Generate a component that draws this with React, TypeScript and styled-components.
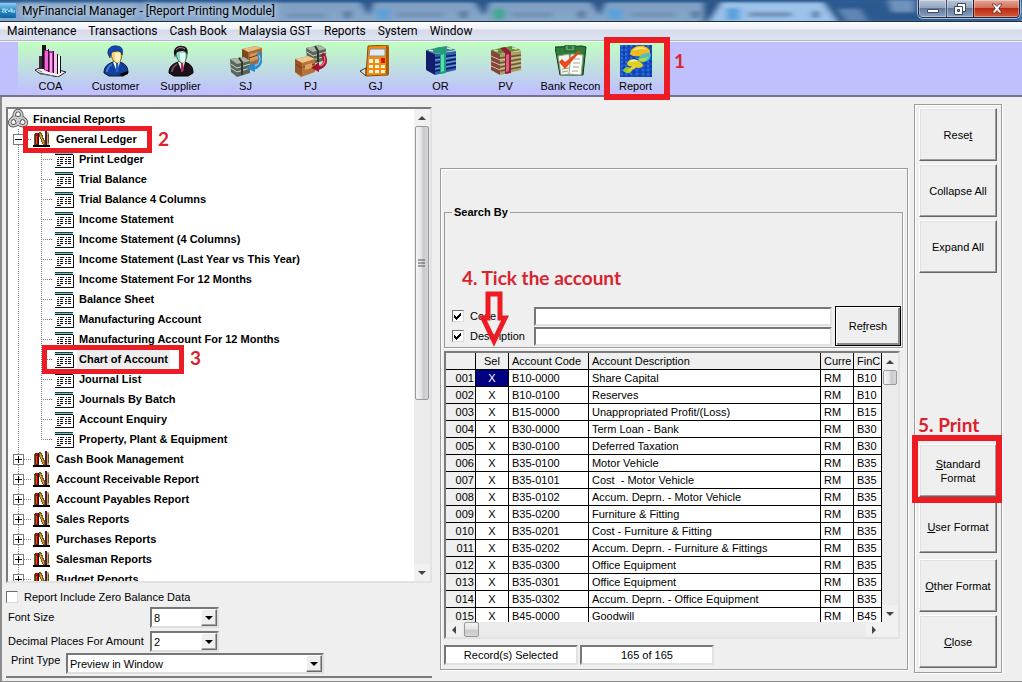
import React, { useState } from 'react';
import styled, { createGlobalStyle, css } from 'styled-components';

const RED = '#ed1c24';
const FACE = '#efefef';

const GlobalStyle = createGlobalStyle`
  * { box-sizing: border-box; }
  body { margin: 0; background: ${FACE}; }
  body, button, input, select, table { font: 11px/14px "Liberation Sans", Arial, sans-serif; color: #000; }
`;

/* ---------- frame ---------- */

const Window = styled.div`
  display: flex;
  flex-direction: column;
  min-height: 100vh;
  background: ${FACE};
`;

const TitleBar = styled.header`
  position: relative;
  display: flex;
  align-items: center;
  height: 22px;
  overflow: hidden;
  background: linear-gradient(#2a5c92 0 1px, #7f9fc3 4px, #86a6ca 20px);
  border-bottom: 1px solid #1f2f45;
`;

const Backdrop = styled.svg`
  position: absolute;
  inset: 0;
  width: 100%;
  height: 100%;
`;

const AppIcon = styled.svg`
  position: relative;
  flex: none;
`;

const Title = styled.h1`
  position: relative;
  flex: 1;
  margin: 0;
  padding-left: 6px;
  font: 12px/20px Roboto, "Open Sans", sans-serif;
  white-space: nowrap;
  text-shadow: 0 0 6px #dce8f5, 0 0 8px #dce8f5;
`;

const WindowButtons = styled.div`
  position: relative;
  align-self: flex-start;
  display: flex;
  height: 18px;
  margin-right: 2px;
  border: 1px solid #1d2c42;
  border-top: 0;
  border-radius: 0 0 5px 5px;
  overflow: hidden;
  box-shadow: 0 0 0 1px #a9bdd6;
`;

const WindowButton = styled.button<{ $close?: boolean }>`
  display: grid;
  place-items: center;
  width: ${p => (p.$close ? 46 : 27)}px;
  padding: 0;
  border: 0;
  border-left: 1px solid ${p => (p.$close ? '#3a1616' : '#3d4f69')};
  background: ${p => p.$close
    ? 'linear-gradient(#e3a899, #d1705c 45%, #b92b11 50%, #d8593a)'
    : 'linear-gradient(#b9c6d8, #93a6c0 45%, #62799b 50%, #8ba3c2)'};
  box-shadow: inset 0 0 0 1px rgba(255, 255, 255, 0.35);
  &:first-child { border-left: 0; }
`;

const MenuBar = styled.nav`
  display: flex;
  gap: 12px;
  height: 19px;
  padding-left: 7px;
  background: linear-gradient(#fdfdfe 0, #eef1f8 7px, #d5daea 8px, #dfe4f2);
  border-bottom: 1px solid #b4b8c2;
`;

const MenuItem = styled.button`
  padding: 0;
  border: 0;
  background: none;
  font: 12px/19px Roboto, "Open Sans", sans-serif;
  white-space: nowrap;
`;

const Toolbar = styled.div`
  display: flex;
  height: 56px;
  padding-left: 18px;
  background: #c0c0ff;
  border-top: 1px solid #f2f2fb;
  border-bottom: 2px solid #77748a;
`;

const ToolGroup = styled.div`
  display: flex;
  background: linear-gradient(#c0ffc0, #c0c0ff 50px);
`;

const Tool = styled.button`
  position: relative;
  display: flex;
  flex-direction: column;
  align-items: center;
  gap: 2px;
  width: 65px;
  padding: 3px 0 0;
  border: 0;
  background: none;
  white-space: nowrap;
`;

/* ---------- walkthrough marks ---------- */

const Highlight = styled.span<{ $top: number; $left: number; $width: number; $height: number; $weight?: number }>`
  position: absolute;
  z-index: 2;
  top: ${p => p.$top}px;
  left: ${p => p.$left}px;
  width: ${p => p.$width}px;
  height: ${p => p.$height}px;
  border: ${p => p.$weight ?? 5}px solid ${RED};
  pointer-events: none;
`;

const Step = styled.span<{ $top: number; $left: number }>`
  position: absolute;
  z-index: 3;
  top: ${p => p.$top}px;
  left: ${p => p.$left}px;
  font: bold 19px/22px Lato, "Open Sans", sans-serif;
  color: #d9232e;
  white-space: nowrap;
`;

const ArrowMark = styled.svg`
  position: absolute;
  z-index: 3;
  top: 71px;
  left: 34px;
  pointer-events: none;
`;

/* ---------- workspace ---------- */

const Workspace = styled.main`
  flex: 1;
  display: grid;
  grid-template-columns: minmax(0, 426fr) minmax(0, 468fr) 88px;
  column-gap: 6px;
  padding: 7px 20px 0 4px;
  border-left: 2px solid #8b8b8b;
  border-bottom: 1px solid #8b8b8b;
`;

const ReportColumn = styled.section`
  display: flex;
  flex-direction: column;
  padding: 3px 0 3px;
  margin-right: 1px;
`;

const TreeBox = styled.div`
  flex: 1 1 0;
  min-height: 200px;
  display: flex;
  background: #fff;
  border: 2px solid;
  border-color: #7b7b7b #e2e2e2 #e2e2e2 #7b7b7b;
`;

const TreeList = styled.ul`
  flex: 1;
  height: 0;
  min-height: 100%;
  min-width: 0;
  margin: 0;
  padding: 0;
  overflow: hidden;
  list-style: none;
  font-weight: bold;
`;

const TreeRow = styled.li`
  position: relative;
  display: flex;
  align-items: center;
  height: 20px;
`;

const dotsDown = 'repeating-linear-gradient(#808080 0 1px, transparent 1px 2px)';
const dotsAcross = 'repeating-linear-gradient(90deg, #808080 0 1px, transparent 1px 2px)';

const Guide = styled.span<{ $width: number; $x: number; $branch?: boolean; $last?: boolean }>`
  flex: none;
  align-self: stretch;
  display: flex;
  align-items: center;
  width: ${p => p.$width}px;
  padding-left: 5px;
  background-repeat: no-repeat;
  ${p => p.$branch
    ? css`
        background-image: ${dotsDown}, ${dotsAcross};
        background-position: ${p.$x}px 0, ${p.$x}px 10px;
        background-size: 1px ${p.$last ? 10 : 20}px, ${p.$width - p.$x - 2}px 1px;
      `
    : css`
        background-image: ${dotsDown};
        background-position: ${p.$x}px 0;
        background-size: 1px 20px;
      `}
`;

const Expander = styled.button`
  display: block;
  width: 11px;
  height: 11px;
  padding: 0;
  border: 1px solid #7b7b7b;
  background: #fff;
  svg { display: block; }
`;

const TreeIcon = styled.svg`
  flex: none;
`;

const TreeLabel = styled.span<{ $selected?: boolean; $gap: number }>`
  margin-left: ${p => p.$gap}px;
  padding: 2px;
  line-height: 14px;
  white-space: nowrap;
  background: ${p => (p.$selected ? '#ededed' : 'transparent')};
`;

const Options = styled.div`
  display: flex;
  flex-direction: column;
  padding: 7px 0 2px;
  border-bottom: 2px solid #7b7b7b;
`;

const OptionRow = styled.div<{ $height?: number }>`
  display: flex;
  align-items: flex-start;
  height: ${p => p.$height ?? 24}px;
`;

const OptionLabel = styled.label<{ $width: number; $indent?: number; $top?: number }>`
  width: ${p => p.$width}px;
  padding-top: ${p => p.$top ?? 3}px;
  padding-left: ${p => p.$indent ?? 2}px;
  white-space: nowrap;
`;

const CheckLabel = styled.label`
  display: flex;
  align-items: center;
  gap: 6px;
  height: 14px;
  white-space: nowrap;
`;

const tick = (
  <svg width="9" height="9" viewBox="0 0 9 9" shapeRendering="crispEdges">
    <path d="M1 3v3l2 2 5-5V0L3 5z" fill="#000" />
  </svg>
);

const CheckFrame = styled.span`
  position: relative;
  display: grid;
  place-items: center;
  width: 12px;
  height: 12px;
  background: #fff;
  border: 1px solid;
  border-color: #6f6f6f #dcdcdc #dcdcdc #6f6f6f;
  input { position: absolute; inset: 0; width: 100%; height: 100%; margin: 0; opacity: 0; }
  svg { display: none; }
  input:checked + svg { display: block; }
`;

const SelectFrame = styled.div<{ $width: number }>`
  position: relative;
  width: ${p => p.$width}px;
  height: 21px;
  border: 2px solid;
  border-color: #777 #dedede #dedede #777;
  background: #fff;
  select {
    display: block;
    width: 100%;
    height: 17px;
    padding: 0 20px 0 2px;
    border: 0;
    background: transparent;
    appearance: none;
  }
`;

const DropArrow = styled.span`
  position: absolute;
  top: 0;
  right: 0;
  display: grid;
  place-items: center;
  width: 16px;
  height: 17px;
  background: ${FACE};
  border: 1px solid;
  border-color: #fff #6b6b6b #6b6b6b #fff;
  box-shadow: inset -1px -1px #a5a5a5;
  pointer-events: none;
`;

/* ---------- scroll bars ---------- */

const ScrollTrack = styled.div<{ $across?: boolean }>`
  flex: none;
  display: flex;
  flex-direction: ${p => (p.$across ? 'row' : 'column')};
  ${p => (p.$across ? 'height: 15px;' : 'width: 16px;')}
  background: #ebebeb;
`;

const ScrollStep = styled.button<{ $across?: boolean }>`
  flex: none;
  display: grid;
  place-items: center;
  width: 16px;
  height: ${p => (p.$across ? 15 : 17)}px;
  padding: 0;
  border: 0;
  background: #f1f1f1;
`;

const ScrollThumb = styled.div<{ $across?: boolean; $size: string }>`
  display: grid;
  place-items: center;
  ${p => (p.$across ? `width: ${p.$size};` : `height: ${p.$size};`)}
  margin: ${p => (p.$across ? '0 0 0 2px' : '0 1px')};
  border: 1px solid #9a9a9a;
  border-radius: 2px;
  background: linear-gradient(${p => (p.$across ? '180deg' : '90deg')}, #f5f5f5, #e4e4e6 45%, #c9c9cd 60%, #d6d6d9);
`;

const Stretch = styled.span`
  flex: 1;
`;

/* ---------- account panel ---------- */

const AccountColumn = styled.section`
  display: flex;
  flex-direction: column;
  padding: 64px 0 11px 1px;
`;

const AccountPanel = styled.div`
  flex: 1;
  display: flex;
  flex-direction: column;
  padding: 36px 4px 4px 3px;
  border: 1px solid #9c9c9c;
  box-shadow: inset 1px 1px #fff, 1px 1px #fff;
`;

const SearchBox = styled.fieldset`
  position: relative;
  min-width: 0;
  margin: 0;
  padding: 87px 1px 1px 7px;
  border: 1px solid #9c9c9c;
  box-shadow: 1px 1px #fff;
  legend { padding: 0 2px; font-weight: bold; }
`;

const SearchGrid = styled.div`
  display: grid;
  grid-template-columns: 82px minmax(0, 1fr) 66px;
  grid-template-rows: 20px 20px;
  align-items: center;
`;

const SearchInput = styled.input`
  width: calc(100% - 3px);
  height: 19px;
  padding: 0 2px;
  background: #fff;
  border: 2px solid;
  border-color: #777 #e2e2e2 #e2e2e2 #777;
`;

const RefreshButton = styled.button`
  grid-row: 1 / 3;
  grid-column: 3;
  height: 40px;
  padding: 0;
  background: ${FACE};
  border: 1px solid #000;
  box-shadow: inset 1px 1px #fff, inset -2px -2px #8a8a8a;
`;

const GridBox = styled.div`
  flex: 1 1 0;
  min-height: 120px;
  display: flex;
  flex-direction: column;
  margin: 3px 3px 6px 0;
  border: 2px solid;
  border-color: #7b7b7b #e2e2e2 #e2e2e2 #7b7b7b;
`;

const GridTop = styled.div`
  flex: 1 1 0;
  min-height: 0;
  display: flex;
`;

const GridView = styled.div`
  flex: 1;
  height: 0;
  min-width: 0;
  min-height: 100%;
  overflow: hidden;
`;

const AccountTable = styled.table`
  width: 100%;
  table-layout: fixed;
  border-collapse: separate;
  border-spacing: 0;
  background: #fff;
  th, td {
    height: 17px;
    padding: 1px 0 0 3px;
    border-right: 1px solid #000;
    border-bottom: 1px solid #000;
    font-weight: normal;
    line-height: 15px;
    text-align: left;
    white-space: pre;
    overflow: hidden;
  }
  th { background: ${FACE}; }
  tbody th { padding-right: 1px; text-align: right; }
  th:nth-child(2), td:nth-child(2) { padding-left: 0; text-align: center; }
`;

const SelCell = styled.td<{ $current: boolean }>`
  ${p => p.$current && css`background: #000080; color: #fff;`}
`;

const StatusRow = styled.div`
  display: flex;
  gap: 2px;
`;

const StatusField = styled.output`
  width: 134px;
  height: 20px;
  line-height: 16px;
  text-align: center;
  background: #fff;
  border: 2px solid;
  border-color: #777 #e2e2e2 #e2e2e2 #777;
`;

/* ---------- commands ---------- */

const CommandColumn = styled.aside`
  display: flex;
  flex-direction: column;
  padding-bottom: 8px;
`;

const CommandPanel = styled.div`
  flex: 1;
  display: flex;
  flex-direction: column;
  gap: 3px;
  padding: 3px 4px 4px;
  border: 1px solid #9c9c9c;
  box-shadow: inset 1px 1px #fff, 1px 1px #fff;
`;

const Command = styled.button`
  position: relative;
  height: 53px;
  padding: 0;
  background: ${FACE};
  border: 1px solid;
  border-color: #fff #666 #666 #fff;
  box-shadow: inset -1px -1px #9e9e9e, inset 1px 1px #e2e2e2;
`;

const CommandGap = styled.span<{ $grow?: boolean }>`
  ${p => (p.$grow ? 'flex: 1;' : 'height: 0;')}
`;

/* ---------- drawings ---------- */

const Arrow = ({ dir }: { dir: 'up' | 'down' | 'left' | 'right' }) => {
  const d = {
    up: 'M0 6l4-4 4 4z',
    down: 'M0 2h8l-4 4z',
    left: 'M6 0v8L2 4z',
    right: 'M2 0v8l4-4z',
  }[dir];
  return <svg width="8" height="8" viewBox="0 0 8 8"><path d={d} fill="#444" /></svg>;
};

const KnotIcon = () => (
  <TreeIcon width="20" height="20" viewBox="0 0 20 20" fill="none">
    <g stroke="#555" strokeWidth="3.6">
      <ellipse cx="10" cy="6.500" rx="3.800" ry="5" />
      <ellipse cx="6.500" cy="12.500" rx="3.800" ry="5" transform="rotate(60 6.500 12.500)" />
      <ellipse cx="13.500" cy="12.500" rx="3.800" ry="5" transform="rotate(-60 13.500 12.500)" />
    </g>
    <g stroke="#cfcfcf" strokeWidth="1.8">
      <ellipse cx="10" cy="6.500" rx="3.800" ry="5" />
      <ellipse cx="6.500" cy="12.500" rx="3.800" ry="5" transform="rotate(60 6.500 12.500)" />
      <ellipse cx="13.500" cy="12.500" rx="3.800" ry="5" transform="rotate(-60 13.500 12.500)" />
    </g>
  </TreeIcon>
);

const BooksIcon = () => (
  <TreeIcon width="17" height="16" viewBox="0 0 17 16" shapeRendering="crispEdges">
    <path d="M0 14h17v2H0z" fill="#000" />
    <path d="M1 3h1v11H1z" fill="#0a8a2c" />
    <path d="M2 2h4v12H2z" fill="#a80808" /><path d="M3 5h1v8H3z" fill="#f04030" />
    <path d="M5 2h1v12H5z" fill="#300" />
    <path d="M6 1h2l4 9v4h-2L6 5z" fill="#7a5a10" /><path d="M7 3l4 10" stroke="#d0a838" />
    <path d="M12 0h2v14h-2z" fill="#4b1a50" /><path d="M14 1h2v13h-2z" fill="#c9ab45" />
    <path d="M15 3h1v9h-1z" fill="#6a5010" />
  </TreeIcon>
);

const ReportIcon = () => (
  <TreeIcon width="19" height="18" viewBox="0 0 19 18" shapeRendering="crispEdges">
    <path d="M1 2h17v15H1z" fill="#fff" />
    <path d="M0 2h18v1H0z" fill="#2b3a3a" /><path d="M0 3h18v1H0z" fill="#5cc8c4" />
    <path d="M0 4h18v1H0zM0 17h19v1H0zM18 5h1v13h-1z" fill="#111" />
    <path d="M3 7h1v1H3zM5 7h4v1H5zM2 9h2v1H2zM5 9h3v1H5zM2 11h2v1H2zM5 11h3v1H5zM2 13h2v1H2zM5 13h3v1H5zM2 15h4v1H2zM11 7h1v1h-1zM13 7h3v1h-3zM10 9h2v1h-2zM13 9h3v1h-3zM10 11h2v1h-2zM13 11h3v1h-3zM10 13h2v1h-2zM13 13h3v1h-3z" fill="#111" />
  </TreeIcon>
);

const toolIcons: Record<string, React.ReactNode> = {
  COA: (
    <>
      <path d="M0 25l9-4 22 6-8 5L4 28z" fill="#f4f0f4" stroke="#222" />
      <path d="M3 25l4 2M5 29l14 2" stroke="#777" />
      <path d="M7 0h4v24H7z" fill="#1a1218" /><path d="M4 11h3v13H4z" fill="#3a303a" />
      <path d="M9 5h5v22l-5-2z" fill="#8c1c80" /><path d="M10 6h3v19h-3z" fill="#e868d6" />
      <path d="M14 6h5v22l-5-1z" fill="#b52aa4" /><path d="M15 8h2v19h-2z" fill="#f7a0ec" />
      <path d="M13 4h1v23h-1zM18 6h1v22h-1z" fill="#2b0a28" />
      <path d="M19 9h4v20l-4-1z" fill="#f4c4ee" /><path d="M22 9h1v20h-1z" fill="#111" />
      <path d="M23 11h2v17h-2z" fill="#fff" /><path d="M25 11h1v17h-1z" fill="#111" />
    </>
  ),
  Customer: (
    <>
      <path d="M4 28c0-7 4-9 9-11h7c5 2 8 4 8 11l-5 3H9z" fill="#12409c" stroke="#0a1430" />
      <path d="M7 27c0-4 2-6 5-8" stroke="#3d7de0" strokeWidth="2" fill="none" />
      <path d="M19 29l9-3v3l-5 2z" fill="#000" />
      <path d="M13 17l4 10 3-10z" fill="#fff" /><path d="M16 18h2l1 7-2 2-1-2z" fill="#1d5bc8" />
      <path d="M11 7c0-5 11-5 11 1 0 6-2 10-5 10s-6-5-6-11z" fill="#ffd36a" stroke="#533708" strokeWidth=".7" />
      <path d="M15 8h5v8l-2 2c-3-1-3-5-3-10z" fill="#fff6c8" />
      <path d="M8 9c-1-6 4-9 9-8 4 0 7 3 5 9-1-3-2-4-5-4-3 1-5 0-6 3l-1 4z" fill="#1246b4" stroke="#081c50" strokeWidth=".6" />
    </>
  ),
  Supplier: (
    <>
      <path d="M4 28c0-7 4-9 9-11h7c5 2 8 4 8 11l-5 3H9z" fill="#1c1218" stroke="#000" />
      <path d="M7 27c0-4 2-6 5-8" stroke="#6b4e5c" strokeWidth="2" fill="none" />
      <path d="M13 17l4 10 3-10z" fill="#fff" /><path d="M16 18h2l1 7-2 2-1-2z" fill="#b02a68" />
      <path d="M11 7c0-5 11-5 11 1 0 6-2 10-5 10s-6-5-6-11z" fill="#8fdcc0" stroke="#113a2e" strokeWidth=".7" />
      <path d="M15 8h5v8l-2 2c-3-1-3-5-3-10z" fill="#e6fff4" />
      <path d="M9 9c-1-6 4-9 8-8 4 0 7 3 5 9-1-3-2-4-5-4-3 1-5 0-6 3l-1 4z" fill="#1e141a" />
      <path d="M11 5c2-3 6-3 9-1" stroke="#b98aa6" fill="none" />
    </>
  ),
  SJ: (
    <>
      <path d="M12 4l14-3 6 2v14l-15 5-5-4z" fill="#a86a34" /><path d="M12 4l14-3 6 2-14 4z" fill="#e6bd84" />
      <path d="M12 4l6 3v14l-6-3z" fill="#7d481c" /><path d="M20 9l9-2v7l-9 3z" fill="#d39a5c" /><path d="M19 13l12-4" stroke="#6d3c14" />
      <path d="M0 14l14-2 6 4v12L7 32l-6-5z" fill="#59645a" />
      <path d="M0 14l14-2 6 4-13 3z" fill="#a9b5a5" /><path d="M1 19l6 4 13-4M1 23l6 4 13-4" stroke="#cdd6c8" fill="none" />
      <path d="M9 13l3 4v13" stroke="#2e382f" strokeWidth="2" fill="none" />
      <path d="M28 8c4 6 3 13-5 15" fill="none" stroke="#2d86c8" strokeWidth="4" /><path d="M29 10c2 5 1 9-4 11" fill="none" stroke="#8cccf4" strokeWidth="1.2" />
      <path d="M25 17v10l-9-4z" fill="#2d86c8" />
    </>
  ),
  PJ: (
    <>
      <path d="M11 3l14-3 6 4v11l-13 4-6-5z" fill="#59645a" /><path d="M11 3l14-3 6 4-13 3z" fill="#a9b5a5" />
      <path d="M12 7l6 4 13-4M12 11l6 4 13-4" stroke="#cdd6c8" fill="none" /><path d="M20 1l3 5v11" stroke="#2e382f" strokeWidth="2" fill="none" />
      <path d="M0 14l13-3 7 3v13L6 32l-6-5z" fill="#b87438" /><path d="M0 14l13-3 7 3-13 4z" fill="#efc890" />
      <path d="M0 14l7 4v13l-7-4z" fill="#96582a" /><path d="M8 22l12-3M1 19l6 4" stroke="#713d16" /><path d="M10 20l7-2v5l-7 2z" fill="#dba265" />
      <path d="M27 9c5 5 4 12-4 14" fill="none" stroke="#a5122e" strokeWidth="4" /><path d="M29 11c2 4 1 8-4 10" fill="none" stroke="#f07a90" strokeWidth="1.2" />
      <path d="M24 17v10l-8-4z" fill="#a5122e" />
    </>
  ),
  GJ: (
    <>
      <path d="M0 26l6-3v8z" fill="#ddd" stroke="#333" />
      <path d="M8 1l20-1v30l-22 1z" fill="#f08a10" stroke="#8a4a00" /><path d="M26 1l3 1v27l-3 1z" fill="#a85a06" />
      <path d="M10 4h15v7H9z" fill="#e4ebee" stroke="#8a8f93" />
      <g fill="#fff3d8">
        <path d="M9 14h4v4H9zM15 14h4v4h-4zM9 20h4v3H9zM15 20h4v3h-4zM21 20h4v3h-4zM9 25h4v3H9zM15 25h4v3h-4zM21 25h4v3h-4z" />
      </g>
      <path d="M21 13h4v5h-4z" fill="#d81810" />
    </>
  ),
  OR: (
    <>
      <path d="M1 5l9 4v21l-9-5z" fill="#141c6c" /><path d="M10 9l21-3v19l-21 5z" fill="#2f5fae" />
      <path d="M1 5l20-4 10 4-21 4z" fill="#3a8f86" />
      <path d="M10 13l21-3M10 18l21-4M10 22l21-4M10 26l21-4" stroke="#0c1b66" strokeWidth="1.6" />
      <path d="M10 15l21-3M10 20l21-4M10 24l21-4" stroke="#84b4da" strokeWidth=".8" />
      <path d="M10 3l5-1 6 5v21l-6 1V8z" fill="#16a276" /><path d="M16 10l3-1v17l-3 1z" fill="#5cdcae" />
      <path d="M4 5l4 1M22 3l5 1" stroke="#c4ecd8" strokeWidth="1.4" />
    </>
  ),
  PV: (
    <>
      <path d="M1 5l9 4v21l-9-5z" fill="#80483c" /><path d="M10 9l21-3v19l-21 5z" fill="#b49a68" />
      <path d="M1 5l20-4 10 4-21 4z" fill="#6c8a3c" />
      <path d="M10 13l21-3M10 18l21-4M10 22l21-4M10 26l21-4" stroke="#59622c" strokeWidth="1.6" />
      <path d="M1 11l9 4M1 16l9 4M1 21l9 4M10 15l21-3M10 20l21-4M10 24l21-4" stroke="#e2b49c" strokeWidth="1" />
      <path d="M10 3l5-1 6 5v21l-6 1V8z" fill="#9c1838" /><path d="M16 10l3-1v17l-3 1z" fill="#d66478" />
      <path d="M4 5l4 1M22 3l5 1" stroke="#dce4a4" strokeWidth="1.4" />
    </>
  ),
  'Bank Recon': (
    <>
      <path d="M0 2l27-1 4 1-3 28H5z" fill="#2c7c38" stroke="#103c18" />
      <path d="M10 0h10v6H10z" fill="#5c9a62" stroke="#1f5f2a" /><path d="M13 1h4v3h-4z" fill="#2c7c38" />
      <path d="M3 11l11-2 3 20-11 1z" fill="#eff3ea" stroke="#8da08c" /><path d="M16 9l12 1-2 20-12-1z" fill="#fbfdf6" stroke="#9cab98" />
      <path d="M19 14h6M18 18h7M18 22h6M17 26h6M7 24l7-1M7 27l6-1" stroke="#9aa697" />
      <path d="M5 17l5 6L25 6 10 18l-3-3z" fill="#f0501c" stroke="#e8441c" strokeWidth="1.4" />
    </>
  ),
  Report: (
    <>
      <path d="M0 0h32v32H0z" fill="#1650c4" />
      <path d="M2 0v32M6 0v32M11 0v32M17 0v32M23 0v32M28 0v32" stroke="#3f8af0" strokeDasharray="2 2" />
      <path d="M4 1v31M9 0v32M14 1v31M20 0v32M26 1v31M31 0v32" stroke="#0a2f90" strokeDasharray="3 2" />
      <path d="M10 9c1-10 17-11 20-3 0 4-2 6-6 6-8-2-9 1-14-3z" fill="#f2b81c" /><path d="M13 6c3-5 11-5 14-1-5-2-9-1-14 1z" fill="#fdeb8a" />
      <path d="M18 14c2-6 12-8 13-4-1 7-8 9-13 4z" fill="#4cc0c8" /><path d="M18 15c4-3 10-1 11-5-3 8-8 8-11 5z" fill="#b6dc30" />
      <path d="M7 19c1-7 13-5 16 1 0 3-5 4-8 2-3-2-6 1-8-3z" fill="#dccf26" /><path d="M9 17c2-3 6-3 9-1z" fill="#fbf6a0" />
      <path d="M3 26c1-5 8-5 9-1-1 5-7 3-9 1z" fill="#8ccc2c" /><path d="M6 28l10-5-2-4z" fill="#f0d030" />
    </>
  ),
};

/* ---------- data ---------- */

const menus = ['Maintenance', 'Transactions', 'Cash Book', 'Malaysia GST', 'Reports', 'System', 'Window'];
const tools = ['COA', 'Customer', 'Supplier', 'SJ', 'PJ', 'GJ', 'OR', 'PV', 'Bank Recon', 'Report'];

const ledgerReports = [
  'Print Ledger', 'Trial Balance', 'Trial Balance 4 Columns', 'Income Statement', 'Income Statement (4 Columns)',
  'Income Statement (Last Year vs This Year)', 'Income Statement For 12 Months', 'Balance Sheet',
  'Manufacturing Account', 'Manufacturing Account For 12 Months', 'Chart of Account', 'Journal List',
  'Journals By Batch', 'Account Enquiry', 'Property, Plant & Equipment',
];

const groups = [
  'Cash Book Management', 'Account Receivable Report', 'Account Payables Report', 'Sales Reports',
  'Purchases Reports', 'Salesman Reports', 'Budget Reports',
];

const accounts: [string, string, string][] = [
  ['B10-0000', 'Share Capital', 'B10'],
  ['B10-0100', 'Reserves', 'B10'],
  ['B15-0000', 'Unappropriated Profit/(Loss)', 'B15'],
  ['B30-0000', 'Term Loan - Bank', 'B30'],
  ['B30-0100', 'Deferred Taxation', 'B30'],
  ['B35-0100', 'Motor Vehicle', 'B35'],
  ['B35-0101', 'Cost  - Motor Vehicle', 'B35'],
  ['B35-0102', 'Accum. Deprn. - Motor Vehicle', 'B35'],
  ['B35-0200', 'Furniture & Fitting', 'B35'],
  ['B35-0201', 'Cost - Furniture & Fitting', 'B35'],
  ['B35-0202', 'Accum. Deprn. - Furniture & Fittings', 'B35'],
  ['B35-0300', 'Office Equipment', 'B35'],
  ['B35-0301', 'Office Equipment', 'B35'],
  ['B35-0302', 'Accum. Deprn. - Office Equipment', 'B35'],
  ['B45-0000', 'Goodwill', 'B45'],
];

/* ---------- parts ---------- */

const ExpandButton = ({ open, name }: { open?: boolean; name: string }) => (
  <Expander aria-label={`${open ? 'Collapse' : 'Expand'} ${name}`}>
    <svg width="9" height="9" viewBox="0 0 9 9" shapeRendering="crispEdges">
      <path d={open ? 'M1 4h7v1H1z' : 'M1 4h7v1H1zM4 1h1v7H4z'} fill="#000" />
    </svg>
  </Expander>
);

const CheckBox = ({ label, initial }: { label: string; initial?: boolean }) => {
  const [on, setOn] = useState(!!initial);
  return (
    <CheckLabel>
      <CheckFrame>
        <input type="checkbox" checked={on} onChange={e => setOn(e.target.checked)} />
        {tick}
      </CheckFrame>
      {label}
    </CheckLabel>
  );
};

const DropDown = ({ id, width, value }: { id: string; width: number; value: string }) => (
  <SelectFrame $width={width}>
    <select id={id} defaultValue={value}><option>{value}</option></select>
    <DropArrow><svg width="8" height="4" viewBox="0 0 8 4"><path d="M0 0h8L4 4z" /></svg></DropArrow>
  </SelectFrame>
);

const Tree = () => {
  const [selected, setSelected] = useState('Chart of Account');
  return (
    <TreeList>
      <TreeRow><KnotIcon /><TreeLabel $gap={3}>Financial Reports</TreeLabel></TreeRow>
      <TreeRow>
        <Guide $width={25} $x={10} $branch><ExpandButton open name="General Ledger" /></Guide>
        <BooksIcon />
        <TreeLabel $gap={4}>General Ledger</TreeLabel>
        <Highlight $top={-3} $left={15} $width={129} $height={27} />
        <Step $top={-1} $left={150}>2</Step>
      </TreeRow>
      {ledgerReports.map((name, i) => (
        <TreeRow key={name} onClick={() => setSelected(name)}>
          <Guide $width={25} $x={10} />
          <Guide $width={22} $x={8} $branch $last={i === ledgerReports.length - 1} />
          <ReportIcon />
          <TreeLabel $gap={3} $selected={name === selected}>{name}</TreeLabel>
          {name === 'Chart of Account' && (
            <>
              <Highlight $top={-4} $left={34} $width={142} $height={29} />
              <Step $top={-2} $left={182}>3</Step>
            </>
          )}
        </TreeRow>
      ))}
      {groups.map(name => (
        <TreeRow key={name}>
          <Guide $width={25} $x={10} $branch><ExpandButton name={name} /></Guide>
          <BooksIcon />
          <TreeLabel $gap={4}>{name}</TreeLabel>
        </TreeRow>
      ))}
    </TreeList>
  );
};

export default function App() {
  return (
    <Window>
      <GlobalStyle />
      <TitleBar>
        <Backdrop viewBox="0 0 1022 21" preserveAspectRatio="none">
          <defs><filter id="soft"><feGaussianBlur stdDeviation="3 1.5" /></filter></defs>
          <g filter="url(#soft)">
            <path d="M360 0h14l-5 16zM474 0h16l-6 16zM590 0h16l-6 16zM704 0h18l-10 22h-8z" fill="#2a5588" />
            <path d="M722 3h100l14 20H708z" fill="#9cc3ea" />
            <path d="M822 0h200v22H838z" fill="#2a5a90" />
            <path d="M838 9h22l8 12h-22z" fill="#5f86b5" /><path d="M888 0h26v12h-22z" fill="#6f93bd" />
            <path d="M377 9h12v10h-12zM608 9h14v10h-14zM726 8h14v12h-14z" fill="#5aa0dc" />
            <circle cx="499" cy="14" r="6" fill="#3da88c" />
            <path d="M396 12h48v5h-48zM512 12h40v5h-40zM630 12h45v5h-45zM748 12h44v5h-44zM286 13h40v5h-40z" fill="#7592b6" />
            <path d="M460 11h7v7h-7zM578 11h7v7h-7zM692 11h7v7h-7zM812 11h7v7h-7zM344 11h7v7h-7z" fill="#5a7699" />
          </g>
        </Backdrop>
        <AppIcon width="16" height="16" viewBox="0 0 16 16">
          <defs><linearGradient id="app" x2="0" y2="1"><stop stopColor="#8ad0f0" /><stop offset=".5" stopColor="#2b8ac4" /><stop offset="1" stopColor="#0c64a4" /></linearGradient></defs>
          <rect width="16" height="15" rx="1" fill="url(#app)" />
          <path d="M2 6h2L2 9h2M5 5v5M8 6L5 8l2 2M8 7l1 2 1-2M11 5v4h2V7h-2M15 7l-1 3" stroke="#d4f0ff" strokeWidth=".8" fill="none" />
        </AppIcon>
        <Title>MyFinancial Manager - [Report Printing Module]</Title>
        <WindowButtons>
          <WindowButton aria-label="Minimize">
            <svg width="12" height="12" viewBox="0 0 12 12"><path d="M.5 6.500h11v3H.5z" fill="#fff" stroke="#3c4a60" /></svg>
          </WindowButton>
          <WindowButton aria-label="Restore">
            <svg width="12" height="12" viewBox="0 0 12 12"><path d="M3.500.5h8v8h-8z" fill="#fff" stroke="#3c4a60" /><path d="M.5 3.500h8v8h-8z" fill="#fff" stroke="#3c4a60" /><path d="M3.500 6.500h2v2h-2z" fill="#6e84a4" stroke="#3c4a60" /></svg>
          </WindowButton>
          <WindowButton $close aria-label="Close">
            <svg width="12" height="11" viewBox="0 0 12 11"><path d="M1 1h3l2 2.500L8 1h3L7.800 5.500 11 10H8L6 7.500 4 10H1l3.200-4.500z" fill="#fff" stroke="#5a3030" strokeWidth=".8" /></svg>
          </WindowButton>
        </WindowButtons>
      </TitleBar>

      <MenuBar>{menus.map(m => <MenuItem key={m}>{m}</MenuItem>)}</MenuBar>

      <Toolbar>
        <ToolGroup>
          {tools.map(name => (
            <Tool key={name}>
              <svg width="32" height="32" viewBox="0 0 32 32">{toolIcons[name]}</svg>
              {name}
              {name === 'Report' && (
                <>
                  <Highlight $top={-5} $left={1} $width={66} $height={63} $weight={6} />
                  <Step $top={8} $left={71}>1</Step>
                </>
              )}
            </Tool>
          ))}
        </ToolGroup>
      </Toolbar>

      <Workspace>
        <ReportColumn>
          <TreeBox>
            <Tree />
            <ScrollTrack>
              <ScrollStep aria-label="Scroll up"><Arrow dir="up" /></ScrollStep>
              <ScrollThumb $size="58%">
                <svg width="8" height="8" viewBox="0 0 8 8"><path d="M0 1h7M0 4h7M0 7h7" stroke="#555" /></svg>
              </ScrollThumb>
              <Stretch />
              <ScrollStep aria-label="Scroll down"><Arrow dir="down" /></ScrollStep>
            </ScrollTrack>
          </TreeBox>
          <Options>
            <OptionRow $height={17}><CheckBox label="Report Include Zero Balance Data" /></OptionRow>
            <OptionRow>
              <OptionLabel htmlFor="font-size" $width={144}>Font Size</OptionLabel>
              <DropDown id="font-size" width={69} value="8" />
            </OptionRow>
            <OptionRow $height={22}>
              <OptionLabel htmlFor="decimals" $width={144}>Decimal Places For Amount</OptionLabel>
              <DropDown id="decimals" width={69} value="2" />
            </OptionRow>
            <OptionRow $height={21}>
              <OptionLabel htmlFor="print-type" $width={60} $indent={5} $top={0}>Print Type</OptionLabel>
              <DropDown id="print-type" width={258} value="Preview in Window" />
            </OptionRow>
          </Options>
        </ReportColumn>

        <AccountColumn>
          <AccountPanel>
            <SearchBox>
              <legend>Search By</legend>
              <SearchGrid>
                <CheckBox label="Code" initial />
                <SearchInput aria-label="Code" />
                <CheckBox label="Description" initial />
                <SearchInput aria-label="Description" />
                <RefreshButton><span>Re<u>f</u>resh</span></RefreshButton>
              </SearchGrid>
              <Step $top={48} $left={17}>4. Tick the account</Step>
              <ArrowMark width="30" height="58" viewBox="0 0 30 58">
                <path d="M9 4h12v24h5L15 51 4 28h5z" fill="none" stroke={RED} strokeWidth="5" strokeMiterlimit="8" />
              </ArrowMark>
            </SearchBox>

            <GridBox>
              <GridTop>
                <GridView>
                  <AccountTable>
                    <colgroup>
                      <col width="30" /><col width="33" /><col width="80" /><col /><col width="33" /><col width="28" />
                    </colgroup>
                    <thead>
                      <tr><th /><th>Sel</th><th>Account Code</th><th>Account Description</th><th>Curre</th><th>FinC</th></tr>
                    </thead>
                    <tbody>
                      {accounts.map(([code, description, fin], i) => (
                        <tr key={code}>
                          <th scope="row">{String(i + 1).padStart(3, '0')}</th>
                          <SelCell $current={i === 0}>X</SelCell>
                          <td>{code}</td>
                          <td>{description}</td>
                          <td>RM</td>
                          <td>{fin}</td>
                        </tr>
                      ))}
                    </tbody>
                  </AccountTable>
                </GridView>
                <ScrollTrack>
                  <ScrollStep aria-label="Scroll up"><Arrow dir="up" /></ScrollStep>
                  <ScrollThumb $size="15px" />
                  <Stretch />
                  <ScrollStep aria-label="Scroll down"><Arrow dir="down" /></ScrollStep>
                </ScrollTrack>
              </GridTop>
              <ScrollTrack $across>
                <ScrollStep $across aria-label="Scroll left"><Arrow dir="left" /></ScrollStep>
                <ScrollThumb $across $size="15px" />
                <Stretch />
                <ScrollStep $across aria-label="Scroll right"><Arrow dir="right" /></ScrollStep>
                <ScrollStep $across as="span" />
              </ScrollTrack>
            </GridBox>

            <StatusRow>
              <StatusField>Record(s) Selected</StatusField>
              <StatusField>165 of 165</StatusField>
            </StatusRow>
          </AccountPanel>
        </AccountColumn>

        <CommandColumn>
          <CommandPanel>
            <Command>Rese<u>t</u></Command>
            <Command>Collapse All</Command>
            <Command>Expand All</Command>
            <CommandGap $grow />
            <Command>
              <u>S</u>tandard<br />Format
              <Highlight $top={-10} $left={-8} $width={90} $height={68} $weight={6} />
              <Step $top={-31} $left={-2}>5. Print</Step>
            </Command>
            <Command><u>U</u>ser Format</Command>
            <CommandGap />
            <Command><u>O</u>ther Format</Command>
            <Command><u>C</u>lose</Command>
          </CommandPanel>
        </CommandColumn>
      </Workspace>
    </Window>
  );
}
